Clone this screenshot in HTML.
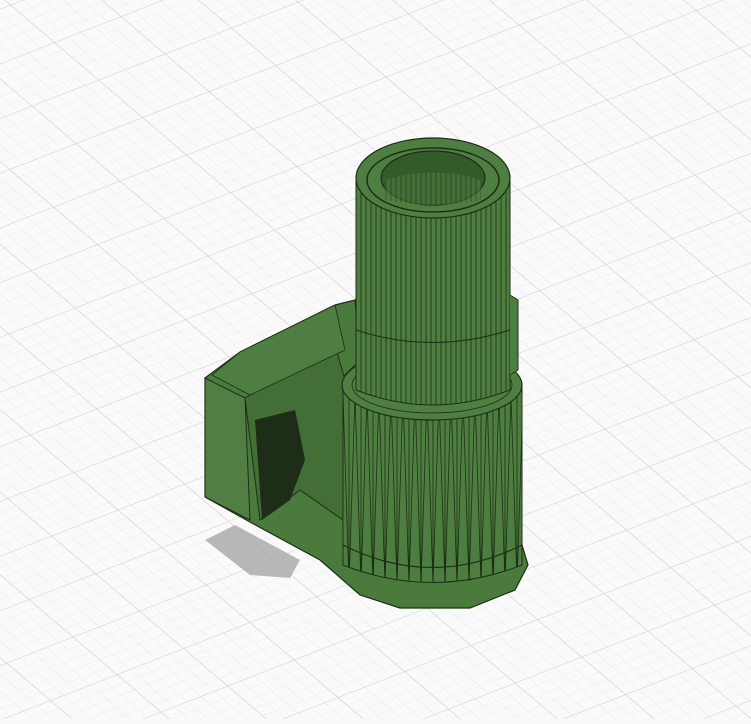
<!DOCTYPE html>
<html><head><style>html,body{margin:0;padding:0;background:#fafafa;overflow:hidden}</style></head>
<body>
<svg width="751" height="719" viewBox="0 0 751 719" xmlns="http://www.w3.org/2000/svg">
<defs>
<pattern id="minor" width="10" height="10" patternUnits="userSpaceOnUse" patternTransform="matrix(1.33 -0.52 0.88 0.75 10 5)">
<path d="M0 0H10M0 0V10" stroke="#e8e8e8" stroke-width="0.7" fill="none"/>
</pattern>
<pattern id="major" width="50" height="50" patternUnits="userSpaceOnUse" patternTransform="matrix(1.33 -0.52 0.88 0.75 10 5)">
<path d="M0 0H50M0 0V50" stroke="#d2d2d2" stroke-width="1" fill="none"/>
</pattern>
<pattern id="vs" width="5" height="10" patternUnits="userSpaceOnUse">
<rect width="5" height="10" fill="#4e7d40"/>
<path d="M1 0V10" stroke="#1d2e16" stroke-width="0.8"/>
</pattern>
<pattern id="tri" width="12" height="190" patternUnits="userSpaceOnUse" x="343" y="395">
<rect width="12" height="190" fill="#4e7d40"/>
<path d="M0 0L6 190L12 0M6 0V190" stroke="#1d2e16" stroke-width="0.8" fill="none"/>
</pattern>
</defs>
<rect width="751" height="719" fill="#fafafa"/>
<rect width="751" height="719" fill="url(#minor)"/>
<rect width="751" height="719" fill="url(#major)"/>
<polygon points="205,540 235,525 300,560 290,578 250,575" fill="#a8a8a8" opacity="0.8"/>
<path d="M205,378 L240,352 L335,305 L355,300 L360,360 L345,375 L343,520 L350,545 L380,565 L470,580 L522,545 L528,565 L515,590 L470,608 L400,608 L360,595 L320,560 L250,522 L205,497 Z" fill="#4b7a3d" stroke="#1d2e16" stroke-width="1.2"/>
<path d="M205,378 L245,398 L250,520 L205,497 Z" fill="#517f43" stroke="#1d2e16" stroke-width="1"/>
<path d="M245,398 L335,345 L345,380 L343,520 L300,490 L260,520 Z" fill="#436f36" stroke="#1d2e16" stroke-width="1"/>
<path d="M255,420 L295,410 L305,460 L290,500 L262,520 Z" fill="#1e2d18"/>
<path d="M240,352 L335,305 L345,350 L250,395 L212,375 Z" fill="#4f7e41" stroke="#1d2e16" stroke-width="0.8"/>
<path d="M343,385 L343,565 Q432,600 522,565 L522,385 Z" fill="url(#tri)" stroke="#1d2e16" stroke-width="1"/>
<path d="M343,545 Q432,590 522,545" fill="none" stroke="#1d2e16" stroke-width="1.2"/>
<ellipse cx="432" cy="385" rx="90" ry="35" fill="#4f7e41" stroke="#1d2e16" stroke-width="1.2"/>
<ellipse cx="432" cy="385" rx="80" ry="28" fill="none" stroke="#1d2e16" stroke-width="0.8"/>
<path d="M356,180 L356,390 Q432,420 510,390 L510,180 Z" fill="url(#vs)" stroke="#1d2e16" stroke-width="1"/>
<path d="M356,330 Q432,355 510,330" fill="none" stroke="#1d2e16" stroke-width="1"/>
<path d="M510,295 L518,300 L518,370 L510,375" fill="#4e7d40" stroke="#1d2e16"/>
<ellipse cx="433" cy="178" rx="77" ry="40" fill="#4f7e41" stroke="#1d2e16" stroke-width="1.2"/>
<ellipse cx="433" cy="180" rx="66" ry="32" fill="none" stroke="#1d2e16" stroke-width="1.5"/>
<ellipse cx="433" cy="178" rx="52" ry="27" fill="#355a2a" stroke="#1d2e16" stroke-width="1.2"/>
<path d="M385,180 Q433,165 481,180 L481,200 Q433,210 385,200 Z" fill="url(#vs)" opacity="0.6"/>
</svg>
</body></html>
